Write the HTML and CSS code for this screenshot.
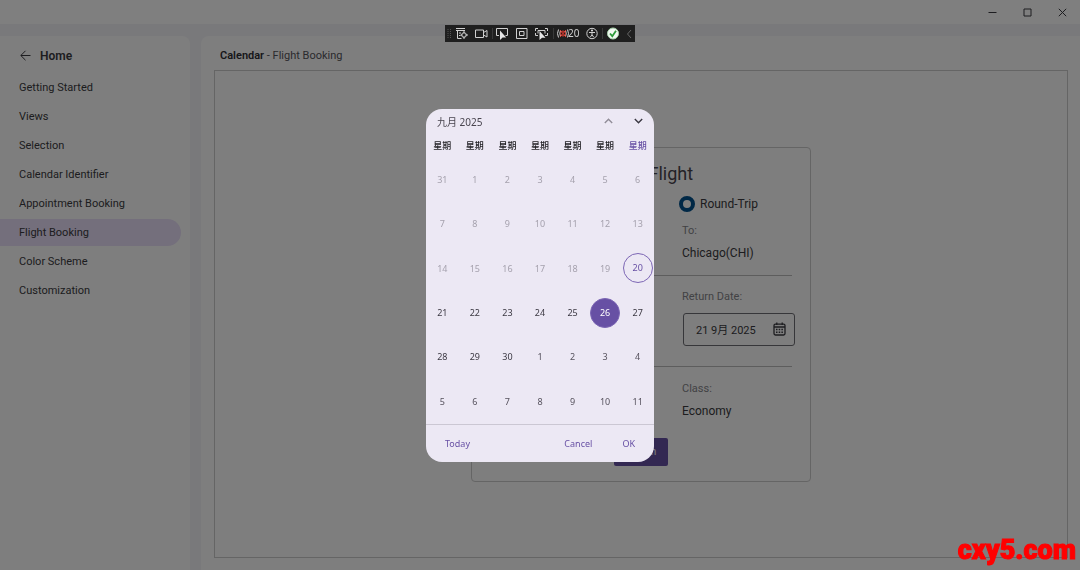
FILE: index.html
```html
<!DOCTYPE html>
<html lang="en">
  <head>
    <meta charset="UTF-8" />
    <meta name="viewport" content="width=device-width, initial-scale=1.0" />
    <title>Calendar - Flight Booking</title>
    <link rel="stylesheet" href="styles.css">
  </head>
  <body>
    <div class="window">
      <header class="titlebar">
        <button type="button" class="window-button" aria-label="Minimize">
          <svg width="9" height="9" viewBox="0 0 9 9"><path d="M0.5 4.5h8" /></svg>
        </button>
        <button type="button" class="window-button" aria-label="Maximize">
          <svg width="9" height="9" viewBox="0 0 9 9"><path d="M1 1h7v7h-7z" /></svg>
        </button>
        <button type="button" class="window-button" aria-label="Close">
          <svg width="9" height="9" viewBox="0 0 9 9"><path d="M0.8 0.8l7.4 7.4M8.2 0.8l-7.4 7.4" /></svg>
        </button>
      </header>

      <div class="content">
        <nav class="sidebar">
          <a class="home" href="#">
            <svg width="11" height="11" viewBox="0 0 11 11"><path d="M10.5 5.5h-9.5M5.5 0.8l-4.7 4.7l4.7 4.7" /></svg>
            Home
          </a>
          <a class="nav-item" href="#">Getting Started</a>
          <a class="nav-item" href="#">Views</a>
          <a class="nav-item" href="#">Selection</a>
          <a class="nav-item" href="#">Calendar Identifier</a>
          <a class="nav-item" href="#">Appointment Booking</a>
          <a class="nav-item active" href="#">Flight Booking</a>
          <a class="nav-item" href="#">Color Scheme</a>
          <a class="nav-item" href="#">Customization</a>
        </nav>

        <main class="main">
          <h1 class="breadcrumb"><b>Calendar</b> <span>-</span> Flight Booking</h1>
          <div class="sample">
            <form class="booking">
              <h2>Book a Flight</h2>
              <div class="row">
                <label class="trip"><input type="radio" name="trip" checked />Round-Trip</label>
                <span class="caption">To:</span>
                <span class="value">Chicago(CHI)</span>
              </div>
              <div class="row dates">
                <label class="caption" for="returnDate">Return Date:</label>
                <div class="date-box">
                  <input type="text" id="returnDate" value="21 9月 2025" readonly />
                  <svg width="13" height="14" viewBox="0 0 13 14">
                    <rect x="1" y="2.2" width="11" height="10.8" rx="1.4" />
                    <path d="M1 5h11M3.8 0.5v2.5M9.2 0.5v2.5" />
                    <path class="dots" d="M3 7.6h7M3 10.2h7" />
                  </svg>
                </div>
              </div>
              <div class="row class-row">
                <span class="caption">Class:</span>
                <span class="value">Economy</span>
              </div>
              <button type="button" class="search">Search</button>
            </form>
          </div>
        </main>
      </div>
    </div>

    <div class="overlay">
      <div class="dialog" role="dialog" aria-label="Calendar">
        <div class="dialog-header">
          <span class="month">九月 2025</span>
          <button type="button" class="arrow previous" aria-label="Previous month">
            <svg width="9" height="6" viewBox="0 0 9 6"><path d="M0.8 5l3.7-3.7l3.7 3.7" /></svg>
          </button>
          <button type="button" class="arrow" aria-label="Next month">
            <svg width="9" height="6" viewBox="0 0 9 6"><path d="M0.8 1l3.7 3.7l3.7-3.7" /></svg>
          </button>
        </div>
        <table class="month-view">
          <thead>
            <tr>
              <th>星期</th><th>星期</th><th>星期</th><th>星期</th><th>星期</th><th>星期</th><th class="accent">星期</th>
            </tr>
          </thead>
          <tbody>
            <tr class="disabled">
              <td>31</td><td>1</td><td>2</td><td>3</td><td>4</td><td>5</td><td>6</td>
            </tr>
            <tr class="disabled">
              <td>7</td><td>8</td><td>9</td><td>10</td><td>11</td><td>12</td><td>13</td>
            </tr>
            <tr class="disabled">
              <td>14</td><td>15</td><td>16</td><td>17</td><td>18</td><td>19</td><td><span class="day today">20</span></td>
            </tr>
            <tr>
              <td>21</td><td>22</td><td>23</td><td>24</td><td>25</td><td><span class="day selected">26</span></td><td>27</td>
            </tr>
            <tr>
              <td>28</td><td>29</td><td>30</td><td class="trailing">1</td><td class="trailing">2</td><td class="trailing">3</td><td class="trailing">4</td>
            </tr>
            <tr class="trailing">
              <td>5</td><td>6</td><td>7</td><td>8</td><td>9</td><td>10</td><td>11</td>
            </tr>
          </tbody>
        </table>
        <div class="dialog-footer">
          <button type="button" class="today-button">Today</button>
          <button type="button">Cancel</button>
          <button type="button">OK</button>
        </div>
      </div>
    </div>

    <div class="debug-bar">
      <svg width="190" height="17" viewBox="0 0 190 17">
        <path class="grip" d="M3 4v10M5.5 4v10" />
        <path class="divider" d="M47.5 3v11M108.5 3v11M157.5 3v11" />
        <path d="M11 3.500h9M11 5.500h9M12.500 5v8.500h4M14 8h2M14 10.500h1.500" />
        <circle cx="19" cy="10" r="2.300" />
        <path d="M19 6v2.500M19 11.500v2.500M15.500 10h2M20.500 10h2.500" />
        <path d="M30.500 5h8v7.500h-8zM38.500 7.500l3.500-2v6.500l-3.500-2" />
        <path d="M54 10.500h-2.500v-7h11v7h-2" />
        <path class="fill" d="M55 5.500v9.500l2.600-2.400h3.600z" />
        <path d="M71.500 3.500h10.500v10h-10.500zM74.500 6.500h4.500v4h-4.500z" />
        <path d="M90.500 6v-2.500h2.500M100 3.500h2.500v2.500M90.500 8v2.500h2.500M102.500 8v2.500h-2.500M93 8.500v-3h7v3" />
        <path class="fill" d="M94.500 6v9l2.500-2.300h3.500z" />
        <path d="M113.500 4.500q-2 4 0 8M115.500 5.500q-1.500 3 0 6M122.500 4.500q2 4 0 8M120.500 5.500q1.500 3 0 6" />
        <circle class="hot" cx="118" cy="8.500" r="2.500" />
        <path class="hot" d="M115 5l6 7M121 5l-6 7" />
        <circle cx="147" cy="8.500" r="5.200" />
        <circle class="fill" cx="147" cy="5.500" r="1" />
        <path d="M144 7.500h6M147 7.500v2.200l-1.700 2.500M147 9.700l1.700 2.500" />
        <circle class="ok" cx="168" cy="8.500" r="5.500" />
        <path class="check" d="M165 8.500l2.300 2.700l3.700-5.400" />
        <path class="collapse" d="M186 5l-3.500 4l3.500 4" />
      </svg>
      <span>20</span>
    </div>
    <div class="watermark">cxy5.com</div>
  </body>
</html>
```

FILE: styles.css
```css
* {
  margin: 0;
  padding: 0;
  box-sizing: border-box;
}
body {
  font-family: Roboto, "Noto Sans CJK SC", sans-serif;
  font-size: 11px;
  color: #3a3a40;
  background: #fff;
  overflow: hidden;
}
button,
input {
  font: inherit;
  color: inherit;
  border: none;
  background: none;
}
a {
  color: inherit;
  text-decoration: none;
}
svg {
  display: block;
  fill: none;
  stroke: currentColor;
}
.window {
  height: 100vh;
  display: flex;
  flex-direction: column;
  background: #f3f3f6;
}
.titlebar {
  height: 24px;
  display: flex;
  justify-content: flex-end;
  background: #fff;
}
.window-button {
  width: 35px;
  display: flex;
  align-items: center;
  justify-content: center;
}
.content {
  flex: 1;
  display: flex;
  gap: 11px;
  padding-top: 12px;
}
.sidebar {
  width: 190px;
  display: flex;
  flex-direction: column;
  gap: 2px;
  padding-right: 9px;
  background: #fdfdfd;
  border-radius: 0 8px 0 0;
}
.home {
  display: flex;
  align-items: center;
  gap: 9px;
  height: 36px;
  padding: 3px 0 0 20px;
  font-size: 12px;
  font-weight: 600;
}
.nav-item {
  height: 27px;
  padding-left: 19px;
  line-height: 27px;
  border-radius: 0 14px 14px 0;
}
.nav-item.active {
  background: #e8def8;
}
.main {
  flex: 1;
  display: flex;
  flex-direction: column;
  padding: 0 12px 12px 13px;
  background: #fdfdfd;
  border-radius: 8px 0 0 0;
}
.breadcrumb {
  height: 34px;
  padding-left: 6px;
  font-size: 11px;
  font-weight: 400;
  line-height: 39px;
  color: #55555b;
}
.breadcrumb b {
  font-weight: 600;
  color: #2f2f35;
}
.sample {
  flex: 1;
  display: flex;
  align-items: center;
  justify-content: center;
  border: 1px solid #cacaca;
}
.booking {
  width: 340px;
  padding: 12px 18px 15px;
  border: 1px solid #cacaca;
  border-radius: 4px;
}
.booking h2 {
  height: 28px;
  font-size: 18px;
  font-weight: 400;
  line-height: 28px;
  text-align: center;
  color: #49454f;
}
.row {
  display: flex;
  flex-direction: column;
  height: 88px;
  padding-left: 192px;
  border-bottom: 1px solid #bababa;
}
.trip {
  display: flex;
  align-items: center;
  gap: 5px;
  height: 33px;
  font-size: 12px;
  white-space: nowrap;
}
.trip input {
  appearance: none;
  width: 16px;
  height: 16px;
  margin-left: -3px;
  border: 4px solid #00508c;
  border-radius: 50%;
}
.caption {
  height: 20px;
  line-height: 20px;
  color: #85858a;
}
.value {
  height: 24px;
  font-size: 12px;
  line-height: 24px;
}
.dates {
  height: 91px;
  padding-top: 11px;
}
.date-box {
  display: flex;
  align-items: center;
  width: 112px;
  height: 33px;
  margin: 6px 0 0 1px;
  padding: 0 8px 0 12px;
  border: 1px solid #6f6f75;
  border-radius: 3px;
}
.date-box input {
  flex: 1;
  min-width: 0;
}
.date-box svg {
  stroke-width: 1.3;
}
.date-box .dots {
  stroke-width: 1.5;
  stroke-dasharray: 1.5 1.2;
}
.class-row {
  height: 71px;
  padding-top: 12px;
  border: none;
}
.search {
  display: block;
  width: 54px;
  height: 28px;
  margin: 0 auto;
  font-size: 10px;
  color: #fff;
  background: #6750a4;
  border-radius: 2px;
}
.overlay {
  position: fixed;
  inset: 0;
  display: flex;
  align-items: center;
  justify-content: center;
  background: rgba(0, 0, 0, 0.5);
}
.dialog {
  width: 228px;
  font-family: "Noto Sans", "Noto Sans CJK SC", sans-serif;
  font-size: 9px;
  color: #3b3842;
  background: #ece8f4;
  border-radius: 16px;
  overflow: hidden;
}
.dialog-header {
  display: flex;
  align-items: center;
  height: 25px;
  padding: 0 1px 0 11px;
}
.month {
  flex: 1;
  font-size: 10px;
  color: #49454f;
}
.arrow {
  width: 30px;
  height: 25px;
  display: flex;
  align-items: center;
  justify-content: center;
}
.arrow svg {
  stroke-width: 1.4;
}
.arrow.previous {
  color: #928e99;
}
.month-view {
  width: 100%;
  height: 290px;
  table-layout: fixed;
  border-collapse: collapse;
  text-align: center;
}
.month-view th {
  height: 24px;
  font-weight: 500;
  color: #1c1b1f;
}
.month-view th.accent {
  color: #6750a4;
}
.month-view td {
  height: 44px;
}
.disabled {
  color: #a5a1ad;
}
.trailing {
  color: #56525d;
}
.day {
  display: block;
  width: 30px;
  height: 30px;
  margin: 0 auto;
  line-height: 28px;
  border: 1px solid #7c66b4;
  border-radius: 50%;
}
.day.today {
  color: #6750a4;
}
.day.selected {
  color: #fff;
  background: #6750a4;
}
.dialog-footer {
  display: flex;
  height: 38px;
  padding: 0 11px;
  border-top: 1px solid #cbc7d3;
}
.dialog-footer button {
  padding: 0 8px;
  color: #6750a4;
}
.dialog-footer button + button + button {
  margin-left: 14px;
}
.dialog-footer .today-button {
  margin-right: auto;
}
.debug-bar {
  position: fixed;
  top: 25px;
  left: 50%;
  width: 190px;
  height: 17px;
  margin-left: -95px;
  color: #d0d0d0;
  background: #1f1f1f;
}
.debug-bar span {
  position: absolute;
  top: 0;
  left: 123px;
  font-family: "Noto Sans", sans-serif;
  font-size: 10px;
  line-height: 17px;
}
.debug-bar .grip {
  stroke: #555;
  stroke-dasharray: 1 1;
}
.debug-bar .divider {
  stroke: #3a3a3a;
}
.debug-bar .fill {
  fill: #e8e8e8;
  stroke: none;
}
.debug-bar .hot {
  stroke: #e5392d;
}
.debug-bar .ok {
  fill: #f2f8f2;
  stroke: #a9d5ad;
}
.debug-bar .check {
  stroke: #2d9b3a;
  stroke-width: 1.8;
}
.debug-bar .collapse {
  stroke: #666;
}
.watermark {
  position: fixed;
  right: 4px;
  bottom: 2px;
  font-size: 27px;
  font-weight: 900;
  line-height: 36px;
  color: #f00;
  -webkit-text-stroke: 1px #f00;
}
```
